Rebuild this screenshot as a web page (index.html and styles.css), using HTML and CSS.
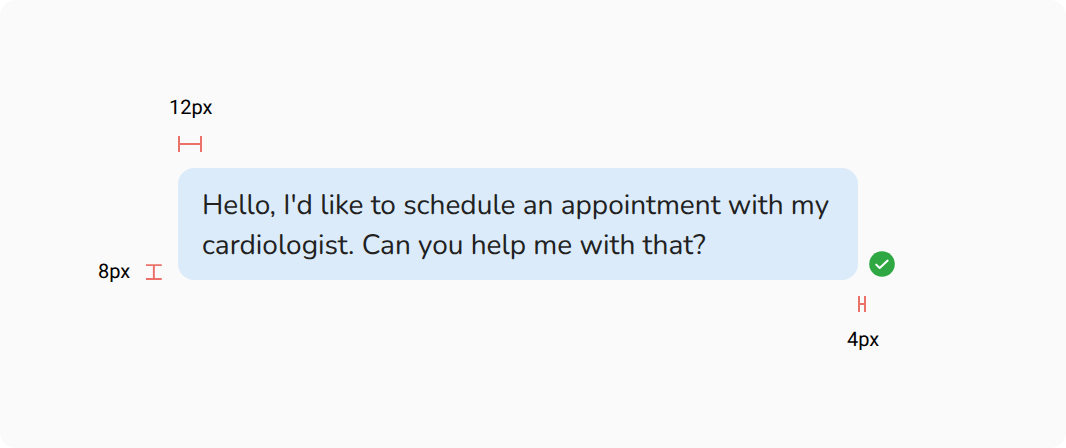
FILE: index.html
```html
<!DOCTYPE html>
<html lang="en">
<head>
<meta charset="utf-8">
<meta name="viewport" content="width=device-width, initial-scale=1">
<title>Message bubble spacing</title>
<link rel="stylesheet" href="styles.css">
</head>
<body>
<main class="canvas">
  <div class="spec">
    <div class="note note-top">
      <span class="label">12px</span>
      <svg class="mark" width="24" height="16" viewBox="0 0 24 16" aria-hidden="true"><path d="M1 0v16M23 0v16M1 8h22"/></svg>
    </div>
    <div class="note note-side">
      <span class="label">8px</span>
      <svg class="mark" width="16" height="16" viewBox="0 0 16 16" aria-hidden="true"><path d="M0 1h16M0 15h16M8 1v14"/></svg>
    </div>
    <p class="bubble">Hello, I'd like to schedule an appointment with my cardiologist. Can you help me with that?</p>
    <svg class="status" width="26" height="26" viewBox="0 0 26 26" role="img" aria-label="Delivered"><circle cx="13" cy="13" r="12.8"/><path d="M7.2 13.6l3.5 3.4 8-7.4"/></svg>
    <div class="note note-bottom">
      <svg class="mark" width="8" height="16" viewBox="0 0 8 16" aria-hidden="true"><path d="M1 0v16M7 0v16M1 8h6"/></svg>
      <span class="label">4px</span>
    </div>
  </div>
</main>
</body>
</html>
```

FILE: styles.css
```css
body {
  margin: 0;
  background: #fff;
  color: #000;
  font-family: Roboto, sans-serif;
  text-rendering: geometricPrecision;
}

.canvas {
  box-sizing: border-box;
  min-height: 100vh;
  padding: 98px 168px 80px 98px;
  border-radius: 16px;
  background: #fafafa;
}

.spec {
  display: grid;
  grid-template-columns: 80px minmax(0, 680px) auto;
}

.note {
  display: flex;
}

.note-top {
  grid-area: 1 / 2;
  flex-direction: column;
  gap: 20px;
  margin: 0 0 16px -9px;
}

.note-top .mark {
  margin-left: 9px;
}

.note-side {
  grid-area: 2 / 1;
  align-self: end;
  align-items: flex-end;
  gap: 16px;
  padding-right: 16px;
  justify-content: flex-end;
}

.note-bottom {
  grid-area: 3 / 3;
  flex-direction: column;
  gap: 18px;
  margin-top: 16px;
}

.note-bottom .label {
  margin-left: -11px;
}

.label {
  font-size: 20px;
  line-height: 18px;
}

.mark {
  display: block;
  fill: none;
  stroke: #ec7169;
  stroke-width: 2;
}

.bubble {
  grid-area: 2 / 2;
  margin: 0;
  padding: 17px 24px 15px;
  border-radius: 16px;
  background: #dcebf9;
  color: #212121;
  font-family: Nunito, "Open Sans", sans-serif;
  font-size: 28px;
  font-weight: 400;
  line-height: 40px;
}

.status {
  grid-area: 2 / 3;
  align-self: end;
  margin: 0 0 3px 11px;
  fill: #2fa843;
}

.status path {
  fill: none;
  stroke: #fff;
  stroke-width: 2;
  stroke-linecap: round;
  stroke-linejoin: round;
}
```
